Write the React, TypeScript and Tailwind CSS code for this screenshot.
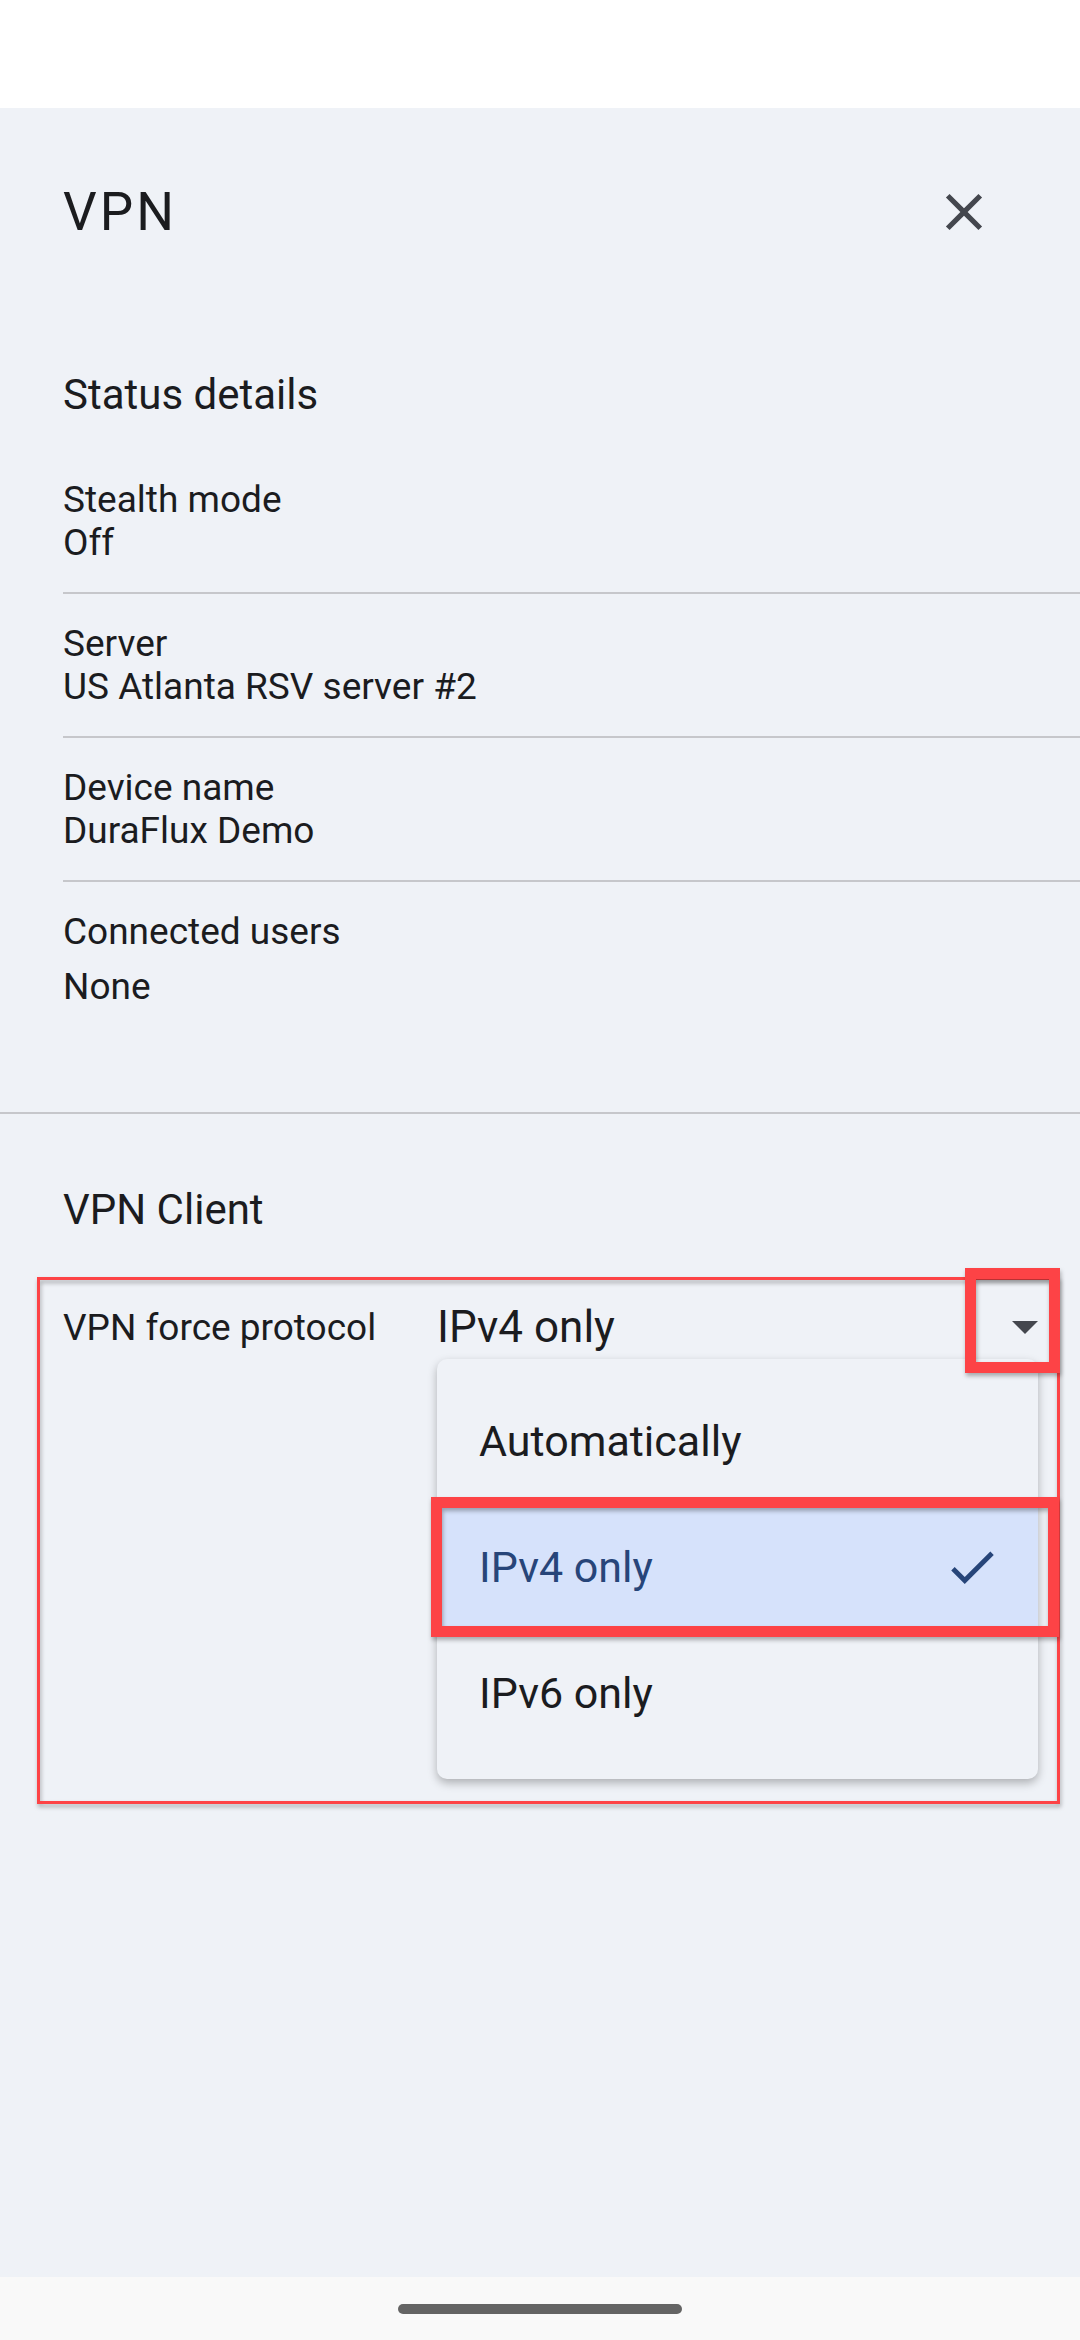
import React from "react";

type Detail = { label: string; value: string };

const details: Detail[] = [
    { label: "Stealth mode", value: "Off" },
    { label: "Server", value: "US Atlanta RSV server #2" },
    { label: "Device name", value: "DuraFlux Demo" },
];

const options = ["Automatically", "IPv4 only", "IPv6 only"];
const selected = "IPv4 only";

function CloseIcon() {
    return (
        <svg width="62" height="62" viewBox="0 0 24 24" fill="#44474e">
            <path d="M19 6.41L17.59 5 12 10.59 6.41 5 5 6.41 10.59 12 5 17.59 6.41 19 12 13.41 17.59 19 19 17.59 13.41 12z" />
        </svg>
    );
}

function CheckIcon() {
    return (
        <svg width="58" height="58" viewBox="0 0 24 24" fill="#274579">
            <path d="M9 16.17L4.83 12l-1.42 1.41L9 19 21 7l-1.41-1.41z" />
        </svg>
    );
}

function DetailRow({ detail }: { detail: Detail }) {
    return (
        <div className="ml-[63px] pt-[28px] pb-[28px] border-b-2 border-[#c6c7cb]">
            <div className="text-[37px] leading-[43px]">{detail.label}</div>
            <div className="text-[37px] leading-[43px]">{detail.value}</div>
        </div>
    );
}

export default function App() {
    return (
        <div className="relative w-[1080px] h-[2340px] flex flex-col bg-[#eff2f7] text-[#1b1c1f] font-['Roboto',sans-serif]">
            <div className="h-[108px] bg-white" />

            <header className="h-[208px] flex items-center justify-between pl-[63px] pr-[85px]">
                <div className="text-[53px] leading-[61px] tracking-[3px]">VPN</div>
                <CloseIcon />
            </header>

            <section className="pt-[54px]">
                <h2 className="px-[63px] pb-[31px] text-[42px] leading-[49px]">Status details</h2>
                {details.map((d) => (
                    <DetailRow key={d.label} detail={d} />
                ))}
                <div className="ml-[63px] pt-[28px] pb-[104px]">
                    <div className="text-[37px] leading-[43px]">Connected users</div>
                    <div className="mt-[12px] text-[37px] leading-[43px]">None</div>
                </div>
            </section>

            <div className="h-[2px] bg-[#c6c7cb]" />

            <h2 className="mt-[71px] px-[63px] text-[42px] leading-[49px]">VPN Client</h2>

            <div className="mt-[50px] h-[86px] flex items-center pl-[63px]">
                <div className="w-[374px] text-[37px] leading-[43px]">VPN force protocol</div>
                <div className="relative w-[601px] h-full flex items-center justify-between">
                    <div className="text-[44px] leading-[50px]">{selected}</div>
                    <svg width="26" height="13" viewBox="0 0 26 13" fill="#44474e">
                        <polygon points="0,0 26,0 13,13" />
                    </svg>
                    <div className="absolute left-0 right-0 top-[75px] z-10 pt-[19px] pb-[23px] bg-[#eff2f7] rounded-[10px] shadow-[0_4px_10px_rgba(0,0,0,0.28)]">
                        {options.map((o) =>
                            o === selected ? (
                                <div key={o} className="h-[126px] flex items-center justify-between pl-[42px] pr-[37px] bg-[#d6e2fb] text-[#274579]">
                                    <span className="text-[43px] leading-[50px]">{o}</span>
                                    <CheckIcon />
                                </div>
                            ) : (
                                <div key={o} className="h-[126px] flex items-center pl-[42px]">
                                    <span className="text-[43px] leading-[50px]">{o}</span>
                                </div>
                            )
                        )}
                    </div>
                </div>
            </div>

            <div className="mt-auto h-[63px] pt-[27px] flex justify-center bg-[#f9f9f9]">
                <div className="w-[284px] h-[10px] rounded-full bg-[#646464]" />
            </div>

            {/* annotation boxes */}
            <div className="absolute z-20 left-[37px] top-[1277px] w-[1023px] h-[527px] border-[3px] border-[#fd4346] drop-shadow-[1px_3px_2px_rgba(0,0,0,0.3)]" />
            <div className="absolute z-20 left-[965px] top-[1268px] w-[95px] h-[105px] border-[11px] border-[#fd4346] drop-shadow-[1px_3px_2px_rgba(0,0,0,0.3)]" />
            <div className="absolute z-20 left-[431px] top-[1497px] w-[628px] h-[140px] border-[11px] border-[#fd4346] drop-shadow-[1px_3px_2px_rgba(0,0,0,0.3)]" />
        </div>
    );
}
